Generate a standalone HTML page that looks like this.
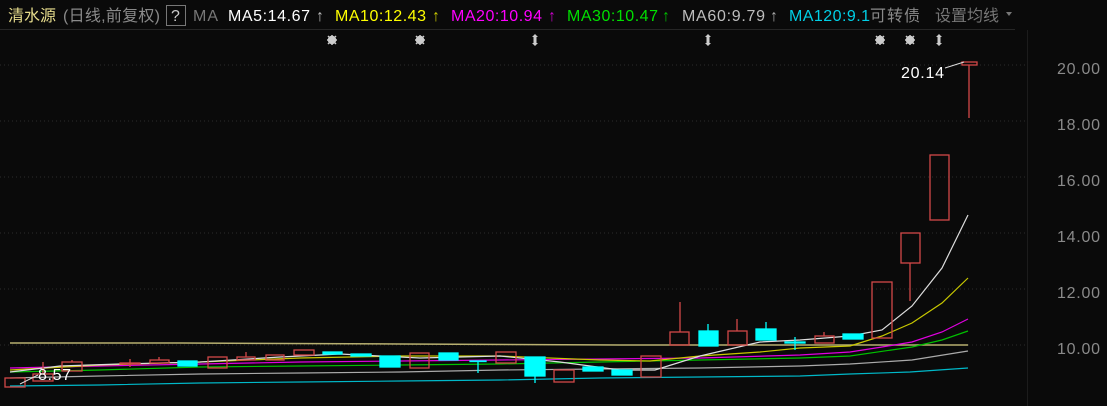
<!DOCTYPE html>
<html><head><meta charset="utf-8"><style>
body{margin:0;background:#0a0a0a;width:1107px;height:406px;overflow:hidden;font-family:"Liberation Sans","Noto Sans CJK SC",sans-serif}
svg{position:absolute;left:0;top:0}
</style></head><body>
<svg width="1107" height="406" viewBox="0 0 1107 406" font-family="Liberation Sans, Noto Sans CJK SC, sans-serif">
<rect width="1107" height="406" fill="#0a0a0a"/>
<line x1="0" y1="29.5" x2="1015" y2="29.5" stroke="#262626"/>
<line x1="1027.5" y1="30" x2="1027.5" y2="406" stroke="#1c1c1c"/>
<g stroke="#2c2c2c" stroke-dasharray="1 3">
<line x1="0" y1="65" x2="1027" y2="65"/><line x1="0" y1="121" x2="1027" y2="121"/>
<line x1="0" y1="177" x2="1027" y2="177"/><line x1="0" y1="233" x2="1027" y2="233"/>
<line x1="0" y1="289" x2="1027" y2="289"/><line x1="0" y1="345" x2="1027" y2="345"/>
</g>
<g font-size="16" fill="#8a8a8a">
<text x="1057" y="74" textLength="43">20.00</text>
<text x="1057" y="130" textLength="43">18.00</text>
<text x="1057" y="186" textLength="43">16.00</text>
<text x="1057" y="242" textLength="43">14.00</text>
<text x="1057" y="298" textLength="43">12.00</text>
<text x="1057" y="354" textLength="43">10.00</text>
</g>
<!-- header -->
<g font-size="16">
<text x="8" y="21" fill="#e6dc8c" textLength="48">清水源</text>
<text x="63" y="21" fill="#8a8a8a" textLength="97">(日线,前复权)</text>
<rect x="166.5" y="5.5" width="19" height="20" fill="none" stroke="#777"/>
<text x="171" y="21" fill="#ccc">?</text>
<text x="193" y="21" fill="#777" textLength="25">MA</text>
<text x="228" y="21" fill="#fff" textLength="82">MA5:14.67</text><text x="316" y="21" fill="#bbb">↑</text>
<text x="335" y="21" fill="#ffff00" textLength="91">MA10:12.43</text><text x="432" y="21" fill="#cccc00">↑</text>
<text x="451" y="21" fill="#ff00ff" textLength="91">MA20:10.94</text><text x="548" y="21" fill="#cc00cc">↑</text>
<text x="567" y="21" fill="#00e000" textLength="91">MA30:10.47</text><text x="662" y="21" fill="#00c000">↑</text>
<text x="682" y="21" fill="#bdbdbd" textLength="83">MA60:9.79</text><text x="770" y="21" fill="#aaa">↑</text>
<text x="789" y="21" fill="#00cfe6" textLength="81">MA120:9.1</text>
<text x="870" y="21" fill="#8a8a8a" textLength="50">可转债</text>
<text x="935" y="21" fill="#777" textLength="64">设置均线</text>
<path d="M1006 12 l6 0 l-3 4 z" fill="#777"/>
</g>
<!-- markers -->
<g fill="#ccc" stroke="#ccc" stroke-width="1.5">
<g transform="translate(332,40)"><circle r="3.5"/><path d="M-5 0H5M0-5V5M-4-4L4 4M-4 4L4-4"/></g>
<g transform="translate(420,40)"><circle r="3.5"/><path d="M-5 0H5M0-5V5M-4-4L4 4M-4 4L4-4"/></g>
<g transform="translate(880,40)"><circle r="3.5"/><path d="M-5 0H5M0-5V5M-4-4L4 4M-4 4L4-4"/></g>
<g transform="translate(910,40)"><circle r="3.5"/><path d="M-5 0H5M0-5V5M-4-4L4 4M-4 4L4-4"/></g>
</g>
<g fill="#ccc">
<path d="M535 34 l3 3 h-1.5 v6 h1.5 l-3 3 l-3-3 h1.5 v-6 h-1.5z"/>
<path d="M708 34 l3 3 h-1.5 v6 h1.5 l-3 3 l-3-3 h1.5 v-6 h-1.5z"/>
<path d="M939 34 l3 3 h-1.5 v6 h1.5 l-3 3 l-3-3 h1.5 v-6 h-1.5z"/>
</g>
<!-- flat khaki line -->
<polyline points="10,343 180,343 400,344 620,345 850,345 968,345" fill="none" stroke="#b8b070" stroke-width="1.5"/>
<!-- MA lines -->
<polyline fill="none" stroke="#00b8c8" stroke-width="1.2" points="10,386 100,385 200,383 300,382 400,381 500,380 600,378 700,377 800,376 850,374 910,372 968,368"/>
<polyline fill="none" stroke="#aaa" stroke-width="1.2" points="10,378 100,376 200,374 300,373 400,372 500,370 600,369 700,368 800,366 850,364 912,360 968,351"/>
<polyline fill="none" stroke="#00c000" stroke-width="1.2" points="10,372 100,370 200,367 300,366 400,365 500,364 600,362 700,360 800,358 850,356 912,347 942,340 968,331"/>
<polyline fill="none" stroke="#e000e0" stroke-width="1.2" points="10,368 100,366 200,364 300,362 400,361 500,360 600,359 700,358 800,355 850,352 882,347 912,342 942,332 968,319"/>
<polyline fill="none" stroke="#c8c800" stroke-width="1.2" points="10,370 100,365 200,362 300,358 400,356 500,356 600,360 650,361 700,356 760,352 800,348 850,346 882,336 912,323 942,303 968,278"/>
<polyline fill="none" stroke="#ddd" stroke-width="1.2" points="10,372 60,366 120,364 200,362 280,357 340,354 420,358 500,356 560,362 620,370 655,370 700,356 760,342 800,340 850,336 882,330 912,306 942,268 968,215"/>
<!-- candles red -->
<g fill="none" stroke="#d24848" stroke-width="1.3">
<rect x="5" y="378" width="20" height="9"/>
<line x1="43" y1="362" x2="43" y2="374"/><rect x="33" y="374" width="20" height="7"/>
<line x1="72" y1="360" x2="72" y2="362"/><rect x="62" y="362" width="20" height="9"/>
<line x1="130" y1="359" x2="130" y2="367"/><rect x="120" y="363" width="20" height="1"/>
<line x1="159" y1="357" x2="159" y2="360"/><rect x="150" y="360" width="19" height="3"/>
<rect x="208" y="357" width="19" height="11"/>
<line x1="246" y1="352" x2="246" y2="357"/><rect x="237" y="357" width="18" height="3"/>
<rect x="266" y="355" width="18" height="5"/>
<rect x="294" y="350" width="20" height="5"/>
<rect x="410" y="353" width="19" height="15"/>
<rect x="496" y="352" width="20" height="11"/>
<rect x="554" y="370" width="20" height="12"/>
<rect x="641" y="356" width="20" height="21"/>
<line x1="680" y1="302" x2="680" y2="332"/><rect x="670" y="332" width="19" height="13"/>
<line x1="737" y1="319" x2="737" y2="331"/><rect x="728" y="331" width="19" height="14"/>
<line x1="824" y1="332" x2="824" y2="336"/><rect x="815" y="336" width="19" height="7"/>
<rect x="872" y="282" width="20" height="56"/>
<line x1="910" y1="263" x2="910" y2="301"/><rect x="901" y="233" width="19" height="30"/>
<rect x="930" y="155" width="19" height="65"/>
<line x1="969" y1="65" x2="969" y2="118"/><rect x="962" y="62" width="15" height="3"/>
</g>
<!-- candles cyan -->
<g fill="#00ffff" stroke="#00ffff" stroke-width="1.3">
<rect x="178" y="361" width="19" height="5"/>
<rect x="323" y="352" width="19" height="2"/>
<rect x="351" y="354" width="20" height="2"/>
<rect x="380" y="356" width="20" height="11"/>
<rect x="439" y="353" width="19" height="7"/>
<line x1="478" y1="361" x2="478" y2="373"/><rect x="470" y="361" width="16" height="0.5"/>
<line x1="535" y1="376" x2="535" y2="383"/><rect x="525" y="357" width="20" height="19"/>
<rect x="583" y="367" width="20" height="4"/>
<rect x="612" y="370" width="20" height="5"/>
<line x1="708" y1="324" x2="708" y2="331"/><rect x="699" y="331" width="19" height="15"/>
<line x1="766" y1="322" x2="766" y2="329"/><rect x="756" y="329" width="20" height="11"/>
<line x1="795" y1="337" x2="795" y2="350"/><rect x="785" y="342" width="20" height="1"/>
<rect x="843" y="334" width="20" height="5"/>
</g>
<!-- price labels -->
<text x="901" y="78" font-size="16" fill="#fff" textLength="43">20.14</text>
<line x1="945" y1="68" x2="964" y2="62" stroke="#ddd"/>
<text x="38" y="380" font-size="16" fill="#fff" textLength="33">8.57</text>
<line x1="20" y1="384" x2="38" y2="375" stroke="#ddd"/>
</svg>
</body></html>
